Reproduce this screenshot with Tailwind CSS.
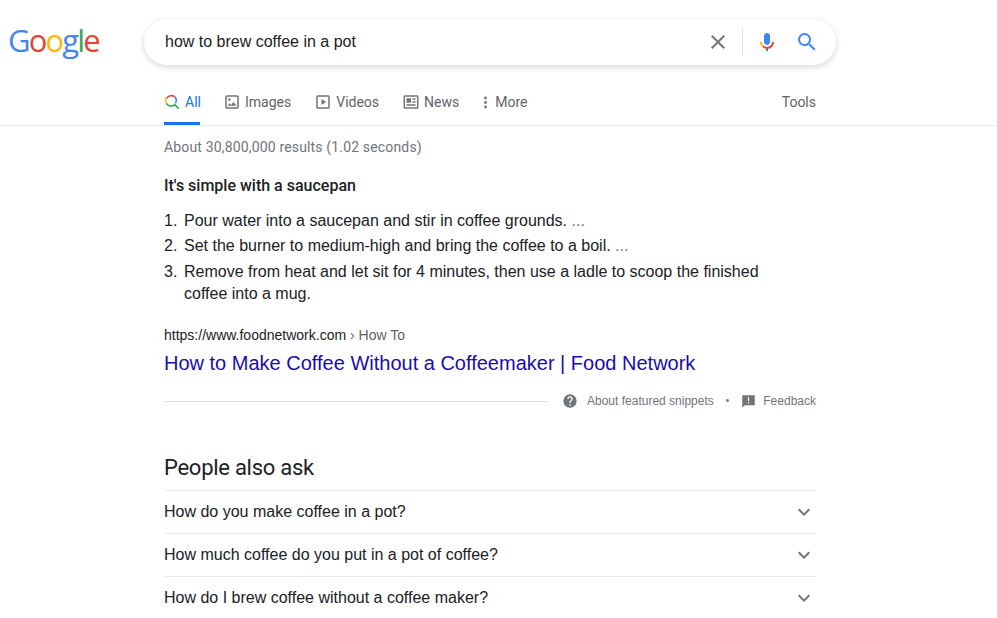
<!doctype html>
<html><head><meta charset="utf-8"><script src="https://cdn.jsdelivr.net/npm/@tailwindcss/browser@4"></script></head>
<body class="bg-white h-[618px] w-[997px] overflow-hidden font-['Liberation_Sans',sans-serif] text-[#202124]">
<header class="flex items-center h-[46px] mt-[19px] pl-2">
  <div class="w-[136px] font-['Open_Sans',sans-serif] font-medium text-[31px] leading-[46px] tracking-[-1.85px] -mt-[5px]"><span class="text-[#4285f4]">G</span><span class="text-[#ea4335]">o</span><span class="text-[#fbbc05]">o</span><span class="text-[#4285f4]">g</span><span class="text-[#34a853]">l</span><span class="text-[#ea4335]">e</span></div>
  <div class="w-[692px] h-[46px] rounded-[23px] bg-white shadow-[0_2px_5px_1px_rgba(64,60,67,0.16)] flex items-center pl-[21px] pr-[17px]">
    <span class="flex-1 text-base">how to brew coffee in a pot</span>
    <svg class="w-6 h-6 mr-[12px]" viewBox="0 0 24 24" fill="#70757a"><path d="M19 6.41L17.59 5 12 10.59 6.41 5 5 6.41 10.59 12 5 17.59 6.41 19 12 13.41 17.59 19 19 17.59 13.41 12z"/></svg>
    <div class="w-px h-[28px] bg-[#dfe1e5] mr-[12px]"></div>
    <svg class="w-6 h-6 mr-[16px]" viewBox="0 0 24 24"><path fill="#4285f4" d="M12 15c1.66 0 3-1.31 3-2.97V5.97C15 4.31 13.66 3 12 3S9 4.31 9 5.97v6.06C9 13.69 10.34 15 12 15z"/><path fill="#34a853" d="M11 18h2v3h-2z"/><path fill="#fbbc05" d="M7.05 16.87c-1.27-1.33-2.05-2.83-2.05-4.87h2c0 1.45.56 2.42 1.47 3.38l-1.42 1.49z"/><path fill="#ea4335" d="M12 16.93a4.97 5.25 0 0 1-3.54-1.55l-1.41 1.49A6.92 7.26 0 0 0 12 19c3.87 0 7-3.13 7-7h-2c0 2.76-2.24 4.93-5 4.93z"/></svg>
    <svg class="w-6 h-6" viewBox="0 0 24 24" fill="#4285f4"><path d="M15.5 14h-.79l-.28-.27A6.47 6.47 0 0 0 16 9.5 6.5 6.5 0 1 0 9.5 16c1.61 0 3.09-.59 4.23-1.57l.27.28v.79l5 4.99L20.49 19l-4.99-5zm-6 0C7.01 14 5 11.99 5 9.5S7.01 5 9.5 5 14 7.01 14 9.5 11.99 14 9.5 14z"/></svg>
  </div>
</header>

<nav class="mt-[19px] h-[41px] border-b border-[#ebebeb] pl-[164px] font-['Roboto',sans-serif] text-sm text-[#5f6368] box-content">
  <div class="w-[652px] h-[41px] flex items-start">
    <div class="relative h-[41px] w-[36px] flex items-center gap-[5px] text-[#1a73e8] pb-[5px] mr-[23px]">
      <svg class="w-4 h-4 shrink-0" viewBox="0 0 24 24" fill="none" stroke-width="2.4"><path stroke="#ea4335" d="M4.2 6.5A8 8 0 0 1 16 4"/><path stroke="#4285f4" d="M16 4a8 8 0 0 1 1 10"/><path stroke="#fbbc05" d="M3.5 5.5a8 8 0 0 0 0 8"/><path stroke="#34a853" d="M3.6 14a8 8 0 0 0 12.4 2l6 6"/></svg>
      <span>All</span>
      <div class="absolute left-0 right-0 bottom-0 h-[3px] bg-[#1a73e8]"></div>
    </div>
    <div class="h-[36px] flex items-center gap-[4px] mr-[23px]"><svg class="w-[18px] h-[18px]" viewBox="0 0 24 24" fill="#70757a"><path fill-rule="evenodd" d="M5 3h14a2 2 0 0 1 2 2v14a2 2 0 0 1-2 2H5a2 2 0 0 1-2-2V5a2 2 0 0 1 2-2zm0 2v14h14V5H5z"/><path d="M14 12l-3.2 4-2-2.4L6 17h12zM8.5 10.5a1.75 1.75 0 1 0 0-3.5 1.75 1.75 0 0 0 0 3.5z"/></svg><span>Images</span></div>
    <div class="h-[36px] flex items-center gap-[4px] mr-[23px]"><svg class="w-[18px] h-[18px]" viewBox="0 0 24 24" fill="#70757a"><path fill-rule="evenodd" d="M5 3h14a2 2 0 0 1 2 2v14a2 2 0 0 1-2 2H5a2 2 0 0 1-2-2V5a2 2 0 0 1 2-2zm0 2v14h14V5H5z"/><path d="M10 8v8l6-4z"/></svg><span>Videos</span></div>
    <div class="h-[36px] flex items-center gap-[4px] mr-[21px]"><svg class="w-[18px] h-[18px]" viewBox="0 0 24 24" fill="#70757a"><path fill-rule="evenodd" d="M4 3h16a2 2 0 0 1 2 2v14a2 2 0 0 1-2 2H4a2 2 0 0 1-2-2V5a2 2 0 0 1 2-2zm0 2v14h16V5H4z"/><path d="M6 7h6v6H6zM14 7h4v2h-4zM14 11h4v2h-4zM6 15h12v2H6z"/></svg><span>News</span></div>
    <div class="h-[36px] flex items-center gap-[4px]"><svg class="w-[11px] h-[15px]" viewBox="0 0 11 15" fill="#70757a"><circle cx="5.5" cy="3" r="1.4"/><circle cx="5.5" cy="7.5" r="1.4"/><circle cx="5.5" cy="12" r="1.4"/></svg><span>More</span></div>
    <span class="ml-auto h-[36px] flex items-center">Tools</span>
  </div>
</nav>

<main class="ml-[164px] w-[652px]">
  <p class="mt-[12px] font-['Roboto',sans-serif] text-sm leading-[18px] tracking-[0.16px] text-[#70757a]">About 30,800,000 results (1.02 seconds)</p>
  <h2 class="mt-[20px] font-['Roboto',sans-serif] text-base font-medium leading-[20px] text-[#202124]">It's simple with a saucepan</h2>
  <ol class="mt-[13px] w-[600px] text-base leading-[24px]">
    <li class="flex mb-[1px]"><span class="w-[20px] shrink-0">1.</span><span>Pour water into a saucepan and stir in coffee grounds. <span class="text-[#70757a]">...</span></span></li>
    <li class="flex mb-[3px]"><span class="w-[20px] shrink-0">2.</span><span>Set the burner to medium-high and bring the coffee to a boil. <span class="text-[#70757a]">...</span></span></li>
    <li class="flex leading-[22px]"><span class="w-[20px] shrink-0">3.</span><span>Remove from heat and let sit for 4 minutes, then use a ladle to scoop the finished coffee into a mug.</span></li>
  </ol>
  <p class="mt-[20px] text-sm leading-[20px]">https://www.foodnetwork.com <span class="text-[#5f6368]">› How To</span></p>
  <a class="block mt-[5px] text-xl leading-[26px] text-[#1a0dab]">How to Make Coffee Without a Coffeemaker | Food Network</a>
  <div class="mt-[13px] flex items-center h-[24px] text-xs text-[#70757a]">
    <div class="w-[384px] h-px bg-[#dadce0] mt-[1px]"></div>
    <svg class="w-4 h-4 ml-[14px]" viewBox="0 0 24 24" fill="#70757a"><path d="M12 2a10 10 0 1 0 0 20 10 10 0 0 0 0-20zm1 17h-2v-2h2v2zm2.07-7.75-.9.92C13.45 12.9 13 13.5 13 15h-2v-.5c0-1.1.45-2.1 1.17-2.83l1.24-1.26A2 2 0 1 0 10 9H8a4 4 0 1 1 8 0c0 .88-.36 1.68-.93 2.25z"/></svg>
    <span class="ml-[9px]">About featured snippets</span>
    <span class="ml-[12px] mr-[12px] text-[10px]">•</span>
    <svg class="w-[15px] h-[15px]" viewBox="0 0 24 24" fill="#70757a"><path d="M2 2h20v16H6l-4 4V2zm9 3v6h2V5h-2zm0 8v2h2v-2h-2z"/></svg>
    <span class="ml-[7px]">Feedback</span>
  </div>
  <h2 class="mt-[41px] font-['Roboto',sans-serif] text-[22px] leading-[28px] tracking-[-0.27px] text-[#202124]">People also ask</h2>
  <div class="mt-[8px] text-base">
    <div class="h-[43px] border-t border-[#ebebeb] flex items-center justify-between">How do you make coffee in a pot?<svg class="w-6 h-6" viewBox="0 0 24 24" fill="#70757a"><path d="M7.41 8.59 12 13.17l4.59-4.58L18 10l-6 6-6-6z"/></svg></div>
    <div class="h-[43px] border-t border-[#ebebeb] flex items-center justify-between">How much coffee do you put in a pot of coffee?<svg class="w-6 h-6" viewBox="0 0 24 24" fill="#70757a"><path d="M7.41 8.59 12 13.17l4.59-4.58L18 10l-6 6-6-6z"/></svg></div>
    <div class="h-[43px] border-t border-[#ebebeb] flex items-center justify-between">How do I brew coffee without a coffee maker?<svg class="w-6 h-6" viewBox="0 0 24 24" fill="#70757a"><path d="M7.41 8.59 12 13.17l4.59-4.58L18 10l-6 6-6-6z"/></svg></div>
  </div>
</main>
</body></html>
